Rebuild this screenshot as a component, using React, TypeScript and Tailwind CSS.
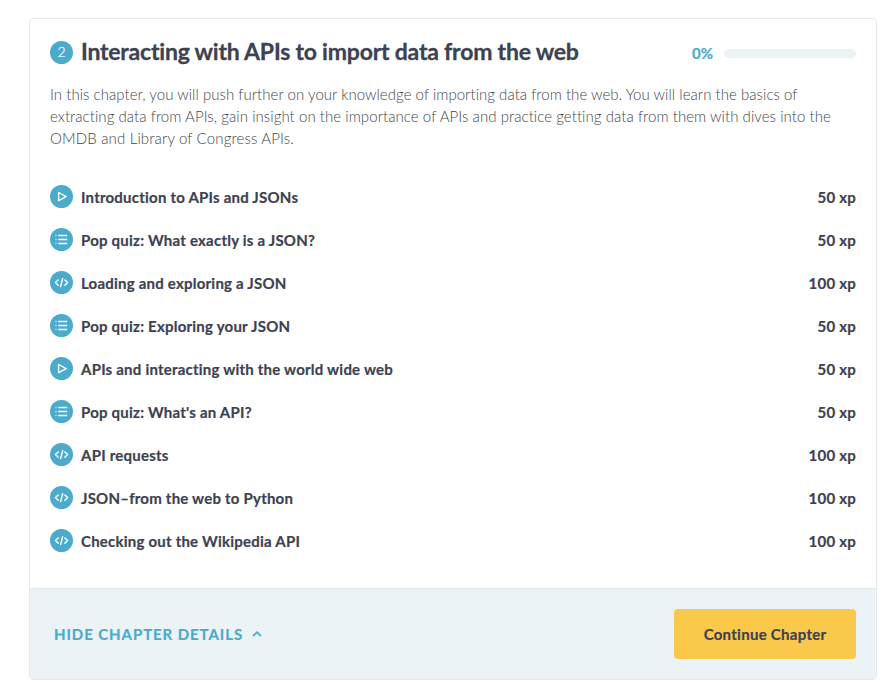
type Kind = 'video' | 'quiz' | 'code';

const lessons: { kind: Kind; title: string; xp: number }[] = [
  { kind: 'video', title: 'Introduction to APIs and JSONs', xp: 50 },
  { kind: 'quiz', title: 'Pop quiz: What exactly is a JSON?', xp: 50 },
  { kind: 'code', title: 'Loading and exploring a JSON', xp: 100 },
  { kind: 'quiz', title: 'Pop quiz: Exploring your JSON', xp: 50 },
  { kind: 'video', title: 'APIs and interacting with the world wide web', xp: 50 },
  { kind: 'quiz', title: "Pop quiz: What's an API?", xp: 50 },
  { kind: 'code', title: 'API requests', xp: 100 },
  { kind: 'code', title: 'JSON–from the web to Python', xp: 100 },
  { kind: 'code', title: 'Checking out the Wikipedia API', xp: 100 },
];

function LessonIcon({ kind }: { kind: Kind }) {
  return (
    <svg viewBox="0 0 23 23" className="size-[23px] shrink-0" fill="none" stroke="white">
      <circle cx="11.5" cy="11.5" r="11.5" fill="#4aabcd" stroke="none" />
      {kind === 'video' && <path d="M8.6 7.5v8.2l7.6-4.1z" strokeWidth="1.35" strokeLinejoin="round" />}
      {kind === 'quiz' && (
        <>
          <path d="M8.2 7.5h9M8.2 11.5h9M8.2 15.4h9" strokeWidth="1.5" />
          <path d="M5.2 7.5h1.5M5.2 11.5h1.5M5.2 15.4h1.5" strokeWidth="1.4" opacity="0.6" />
        </>
      )}
      {kind === 'code' && (
        <path
          d="M8.2 8.9l-2.7 2.7 2.7 2.7M14.9 8.9l2.7 2.7-2.7 2.7M12.6 7.8l-2 7.8"
          strokeWidth="1.45"
          strokeLinecap="round"
          strokeLinejoin="round"
        />
      )}
    </svg>
  );
}

export default function App() {
  return (
    <main className="h-[694px] bg-white pt-[18px] pl-[29px] font-['Lato',sans-serif] text-[#3d4251] [font-variant-ligatures:none]">
      <section className="flex h-[662px] w-[848px] flex-col overflow-hidden rounded-[4px] border border-[#e6eaeb]">
        <div className="flex-1 px-5 pt-[17px]">
          <header className="flex h-8 items-center">
            <span className="flex size-[23px] items-center justify-center rounded-full bg-[#4aabcd] text-[14px] leading-none font-light text-white [-webkit-text-stroke:0.2px]">
              2
            </span>
            <h1 className="-mt-[2px] ml-2 text-[23px] leading-8 font-bold tracking-[-0.21px] whitespace-nowrap [-webkit-text-stroke:0.3px]">
              Interacting with APIs to import data from the web
            </h1>
            <span className="mt-[2px] ml-auto text-[15px] font-bold text-[#4aabcd] [-webkit-text-stroke:0.2px]">0%</span>
            <div className="mt-[2px] ml-[11px] h-[9px] w-[132px] rounded-full bg-[#ebf3f7]" />
          </header>
          <p className="mt-[15px] text-[15px] leading-[22px] font-light tracking-[0.06px] whitespace-nowrap text-[#3f474e]">
            <span className="tracking-[0.04px]">
              In this chapter, you will push further on your knowledge of importing data from the web. You will learn the basics of
            </span>
            <br />
            extracting data from APIs, gain insight on the importance of APIs and practice getting data from them with dives into the
            <br />
            <span className="tracking-[0.15px]">OMDB and Library of Congress APIs.</span>
          </p>
          <ul className="mt-[26px]">
            {lessons.map((lesson) => (
              <li
                key={lesson.title}
                className="flex h-[43px] items-center text-[15px] font-bold tracking-[0.22px] [-webkit-text-stroke:0.2px]"
              >
                <LessonIcon kind={lesson.kind} />
                <span className="mt-[2px] ml-2">{lesson.title}</span>
                <span className="mt-[2px] ml-auto">{lesson.xp} xp</span>
              </li>
            ))}
          </ul>
        </div>
        <footer className="flex h-[91px] items-center justify-between border-t border-[#e2e9eb] bg-[#ebf3f7] pr-5 pl-6">
          <button className="flex items-center text-[15px] font-bold tracking-[0.92px] text-[#4aabcd] [-webkit-text-stroke:0.2px]">
            HIDE CHAPTER DETAILS
            <svg viewBox="0 0 10 8" className="ml-[9px] h-2 w-[10px]" fill="none" stroke="currentColor" strokeWidth="1.8">
              <path d="M1 6.2l4-4 4 4" />
            </svg>
          </button>
          <button className="h-[50px] w-[182px] rounded-[4px] bg-[#fac94b] text-[15px] font-bold tracking-[0.28px] [-webkit-text-stroke:0.2px]">
            Continue Chapter
          </button>
        </footer>
      </section>
    </main>
  );
}
